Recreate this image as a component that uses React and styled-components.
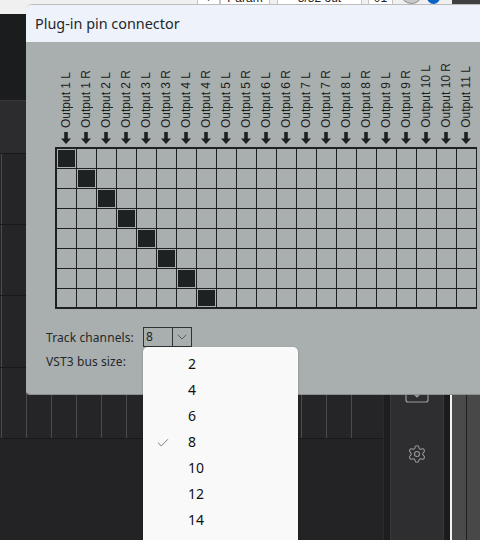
import React from 'react';
import styled, { createGlobalStyle } from 'styled-components';
import { Settings, Check, ChevronDown } from 'lucide-react';

const CHANNELS = [
	'1 L', '1 R', '2 L', '2 R', '3 L', '3 R', '4 L', '4 R', '5 L', '5 R', '6 L', '6 R',
	'7 L', '7 R', '8 L', '8 R', '9 L', '9 R', '10 L', '10 R', '11 L',
];
const ROWS = [0, 1, 2, 3, 4, 5, 6, 7];
const BUS_SIZES = [2, 4, 6, 8, 10, 12, 14];
const TRACK_ROWS = [71, 71, 72, 71];
const BEATS = Array.from({ length: 15 });

function ArrowDown() {
	return (
		<ArrowIcon viewBox="0 0 12 12">
			<path d="M4.2 0h3.6v6.5H11L6 12 1 6.5h3.2z" fill="#1d2122" />
		</ArrowIcon>
	);
}

export default function App() {
	return (
		<Page>
			<GlobalStyle />
			<Toolbar>
				<ToolCell $w={23}>+</ToolCell>
				<ToolCell $w={50}>Param</ToolCell>
				<ToolCell $w={85} $gap={7}>8/82 out</ToolCell>
				<ToolCell $w={25} $gap={6}>01</ToolCell>
				<Knob />
				<BlueDot />
				<DarkEnd />
			</Toolbar>
			<Header />
			<Main>
				<Arrange>
					<HeaderStrip />
					{TRACK_ROWS.map((h, i) => (
						<TrackRow key={i} $h={h}>
							{BEATS.map((_, n) => (
								<Beat key={n} />
							))}
						</TrackRow>
					))}
					<Empty />
				</Arrange>
				<Gutter />
				<SidePanel>
					<SaveIcon viewBox="0 0 24 22">
						<path d="M6 1H3a2 2 0 0 0-2 2v16a2 2 0 0 0 2 2h18a2 2 0 0 0 2-2V3a2 2 0 0 0-2-2h-3" />
						<path d="M12 1v15M8 12l4 4 4-4" />
					</SaveIcon>
					<SettingsIcon size={20} strokeWidth={1.3} />
				</SidePanel>
				<Divider />
				<Ruler />
			</Main>

			<Dialog>
				<TitleBar>Plug-in pin connector</TitleBar>
				<Body>
					<Outputs>
						{CHANNELS.map((c) => (
							<Output key={c}>
								<OutputLabel>Output {c}</OutputLabel>
								<ArrowDown />
							</Output>
						))}
					</Outputs>
					<Matrix>
						{ROWS.map((r) => (
							<MatrixRow key={r}>
								{CHANNELS.map((c, col) => (
									<Cell key={c}>{col === r && <Pin />}</Cell>
								))}
							</MatrixRow>
						))}
					</Matrix>
					<Field>
						<FieldLabel>Track channels:</FieldLabel>
						<Select>
							<SelectValue>8</SelectValue>
							<SelectButton>
								<ChevronDown size={16} strokeWidth={1.2} />
							</SelectButton>
						</Select>
					</Field>
					<Field>
						<FieldLabel>VST3 bus size:</FieldLabel>
					</Field>
				</Body>
			</Dialog>

			<Menu>
				{BUS_SIZES.map((n) => (
					<MenuItem key={n}>
						<MenuCheck>{n === 8 && <Check size={14} strokeWidth={1.1} />}</MenuCheck>
						{n}
					</MenuItem>
				))}
			</Menu>
		</Page>
	);
}

const GlobalStyle = createGlobalStyle`
	html, body {
		margin: 0;
		padding: 0;
		background: #1b1c1e;
		overflow: hidden;
	}
`;

const Page = styled.div`
	position: relative;
	width: 480px;
	height: 540px;
	overflow: hidden;
	display: flex;
	flex-direction: column;
	font-family: 'Noto Sans', sans-serif;
`;

const Toolbar = styled.div`
	height: 14px;
	flex-shrink: 0;
	box-sizing: border-box;
	padding-left: 197px;
	background: #f0f0f0;
	display: flex;
	align-items: flex-start;
	overflow: hidden;
`;

const ToolCell = styled.div`
	width: ${(p) => p.$w}px;
	height: 14px;
	margin-top: -9px;
	margin-left: ${(p) => p.$gap || 0}px;
	background: #fff;
	border: 1px solid #c4c4c4;
	box-sizing: border-box;
	font: 12px/12px 'Liberation Sans', sans-serif;
	color: #222;
	text-align: center;
`;

const Knob = styled.div`
	width: 23px;
	height: 23px;
	flex-shrink: 0;
	box-sizing: border-box;
	margin: -19px 0 0 7px;
	border-radius: 50%;
	background: #c9c9c9;
	border: 1px solid #8d8d8d;
`;

const BlueDot = styled.div`
	width: 13px;
	height: 13px;
	flex-shrink: 0;
	margin: -9px 0 0 4px;
	border-radius: 50%;
	background: #0a64c8;
`;

const DarkEnd = styled.div`
	flex: 1;
	height: 14px;
	margin-left: 12px;
	background: #404040;
`;

const Header = styled.div`
	height: 86px;
	flex-shrink: 0;
	background: #1b1c1e;
`;

const Main = styled.div`
	flex: 1;
	display: flex;
	min-height: 0;
`;

const Arrange = styled.div`
	width: 383px;
	display: flex;
	flex-direction: column;
	overflow: hidden;
`;

const HeaderStrip = styled.div`
	height: 54px;
	flex-shrink: 0;
	background: #2c2b2d;
	border-top: 1px solid #39383a;
	border-bottom: 1px solid #161617;
	box-sizing: border-box;
`;

const TrackRow = styled.div`
	height: ${(p) => p.$h}px;
	flex-shrink: 0;
	box-sizing: border-box;
	background: #252527;
	border-bottom: 1px solid #19191a;
	display: flex;
	padding-left: 1px;
`;

const Beat = styled.div`
	width: 25px;
	flex-shrink: 0;
	box-sizing: border-box;
	border-left: 1px solid #4b4b4d;
`;

const Empty = styled.div`
	flex: 1;
	background: #232325;
`;

const Gutter = styled.div`
	width: 7px;
	background: #1d1d1f;
	border-left: 1px solid #2a2a2c;
	box-sizing: border-box;
`;

const SidePanel = styled.div`
	width: 54px;
	box-sizing: border-box;
	background: #2e2d30;
	border-left: 1px solid #39383b;
	border-right: 1px solid #39383b;
	display: flex;
	flex-direction: column;
	align-items: center;
	padding-top: 281px;
	gap: 41px;
	color: #9b9a9d;
`;

const SaveIcon = styled.svg`
	width: 24px;
	height: 22px;
	flex-shrink: 0;
	fill: none;
	stroke: #9b9a9d;
	stroke-width: 1.2;
`;

const SettingsIcon = styled(Settings)`
	flex-shrink: 0;
`;

const Divider = styled.div`
	width: 8px;
	box-sizing: border-box;
	background: #1b1b1d;
	border-right: 2px solid #f4f4f4;
`;

const Ruler = styled.div`
	flex: 1;
	box-sizing: border-box;
	background: linear-gradient(90deg, #4a4a4a 0 14px, #1f1f1f 14px 15px, #484848 15px);
`;

const Dialog = styled.div`
	position: absolute;
	left: 26px;
	top: 4px;
	width: 480px;
	height: 391px;
	box-sizing: border-box;
	border-radius: 6px 0 0 4px;
	border-top: 1px solid #bdbdbd;
	border-bottom: 1px solid #8a8f8f;
	overflow: hidden;
	display: flex;
	flex-direction: column;
`;

const TitleBar = styled.div`
	height: 37px;
	flex-shrink: 0;
	box-sizing: border-box;
	padding: 0 0 0 9px;
	display: flex;
	align-items: center;
	background: #eef3fb;
	color: #23272b;
	font-size: 14.4px;
`;

const Body = styled.div`
	flex: 1;
	background: #a9afaf;
	padding: 21px 0 0 30px;
	display: flex;
	flex-direction: column;
	color: #1d2122;
`;

const Outputs = styled.div`
	display: flex;
	height: 84px;
`;

const Output = styled.div`
	width: 20px;
	flex-shrink: 0;
	display: flex;
	flex-direction: column;
	align-items: center;
	justify-content: flex-end;
	gap: 4px;
	padding-bottom: 3px;
	box-sizing: border-box;
`;

const ArrowIcon = styled.svg`
	width: 12px;
	height: 12px;
	flex-shrink: 0;
`;

const OutputLabel = styled.span`
	writing-mode: vertical-rl;
	transform: rotate(180deg);
	white-space: nowrap;
	font-family: 'Liberation Sans', sans-serif;
	font-size: 12px;
	line-height: 14px;
`;

const Matrix = styled.div`
	display: flex;
	flex-direction: column;
	width: max-content;
	border-top: 2px solid #1d2122;
	border-left: 2px solid #1d2122;
	margin-left: -1px;
`;

const MatrixRow = styled.div`
	display: flex;
`;

const Cell = styled.div`
	width: 20px;
	height: 20px;
	box-sizing: border-box;
	border-right: 1px solid #1d2122;
	border-bottom: 1px solid #1d2122;
	padding: 1px;
	display: flex;
	align-items: stretch;
	justify-content: stretch;

	${MatrixRow}:last-child & {
		border-bottom-width: 2px;
	}
`;

const Pin = styled.div`
	flex: 1;
	background: #1d2122;
`;

const Field = styled.div`
	display: flex;
	align-items: center;
	height: 20px;
	margin-top: 4px;
	font-size: 12px;
	letter-spacing: 0.1px;

	&:nth-of-type(3) {
		margin-top: 18px;
	}
`;

const FieldLabel = styled.span`
	width: 97px;
	flex-shrink: 0;
	margin-left: -10px;
	color: #24282b;
`;

const Select = styled.div`
	display: flex;
	width: 49px;
	height: 20px;
	box-sizing: border-box;
	border: 1px solid #2f3335;
`;

const SelectValue = styled.span`
	width: 29px;
	box-sizing: border-box;
	padding-left: 2px;
	line-height: 17px;
	border-right: 1px solid #2f3335;
`;

const SelectButton = styled.span`
	flex: 1;
	display: flex;
	align-items: center;
	justify-content: center;
	color: #45494b;
`;

const Menu = styled.div`
	position: absolute;
	left: 143px;
	top: 347px;
	width: 155px;
	height: 210px;
	box-sizing: border-box;
	padding-top: 4px;
	background: #f9f9f9;
	border-radius: 5px;
	box-shadow: 0 1px 3px rgba(0, 0, 0, 0.2);
`;

const MenuItem = styled.div`
	height: 26px;
	display: flex;
	align-items: center;
	padding-left: 45px;
	position: relative;
	top: -1px;
	font-size: 14px;
	color: #111;
`;

const MenuCheck = styled.span`
	position: absolute;
	left: 13px;
	top: 7px;
	color: #333;
`;
